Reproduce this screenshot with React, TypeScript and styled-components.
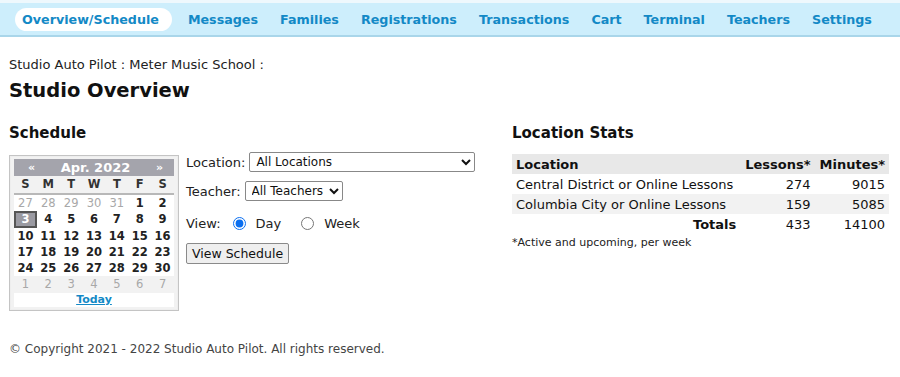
import styled, { createGlobalStyle } from "styled-components";

const GlobalStyle = createGlobalStyle`
  html, body {
    margin: 0;
    padding: 0;
    background: #ffffff;
    font-family: "DejaVu Sans", Verdana, sans-serif;
    color: #111;
  }
`;

const NavBar = styled.nav`
  display: flex;
  align-items: center;
  height: 32px;
  padding: 0 0 0 15px;
  background: #cdeefc;
  border-top: 3px solid #eef8fd;
  border-bottom: 2px solid #a9d6ea;
`;

const NavItem = styled.a<{ $active?: boolean }>`
  font-size: 12.7px;
  font-weight: bold;
  color: #1389c6;
  text-decoration: none;
  padding: ${(p) => (p.$active ? "4px 13px 4px 7px" : "4px 0")};
  margin-right: ${(p) => (p.$active ? "16px" : "22px")};
  border-radius: 12px;
  background: ${(p) => (p.$active ? "#ffffff" : "transparent")};
  white-space: nowrap;
`;

const Page = styled.main`
  padding: 20px 9px 0 9px;
`;

const Crumb = styled.div`
  font-size: 13px;
  color: #222;
`;

const Title = styled.h1`
  font-size: 19.5px;
  font-weight: bold;
  margin: 7px 0 0 0;
`;

const Columns = styled.div`
  display: grid;
  grid-template-columns: 503px 377px;
  margin-top: 22px;
`;

const SectionTitle = styled.h2<{ $gap: number }>`
  font-size: 15px;
  font-weight: bold;
  margin: 0 0 ${(p) => p.$gap}px 0;
`;

const ScheduleRow = styled.div`
  display: flex;
  gap: 7px;
`;

const Calendar = styled.div`
  width: 160px;
  padding: 3px 4px 3px 4px;
  border: 1px solid #c4c4c4;
  box-shadow: inset 0 0 0 1px #eee;
  background: #f2f2f2;
`;

const CalHeader = styled.div`
  display: flex;
  justify-content: space-between;
  align-items: center;
  height: 17px;
  padding: 0 11px 0 14px;
  background: #a4a4ac;
  color: #fff;
  font-weight: bold;
  font-size: 13px;
`;

const Arrow = styled.span`
  font-size: 11px;
`;

const CalGrid = styled.div`
  display: grid;
  grid-template-columns: repeat(7, 1fr);
  font-size: 11.5px;
  text-align: center;
`;

const DayName = styled.div`
  font-weight: bold;
  height: 17px;
  line-height: 17px;
  color: #333;
  border-bottom: 2px solid #b8b8b8;
`;

const DateCell = styled.div<{ $muted?: boolean; $today?: boolean; $plain?: boolean }>`
  height: 16.3px;
  line-height: 16.3px;
  font-weight: ${(p) => (p.$muted ? "normal" : "bold")};
  color: ${(p) => (p.$muted ? "#a8a8a8" : p.$today ? "#fff" : "#222")};
  background: ${(p) => (p.$today ? "#9a9aa2" : p.$plain ? "transparent" : "#fff")};
  outline: ${(p) => (p.$today ? "2px solid #555" : "none")};
  outline-offset: -2px;
`;

const TodayRow = styled.div`
  height: 14px;
  line-height: 13px;
  background: #fff;
  text-align: center;
  font-size: 11px;
  font-weight: bold;
`;

const TodayLink = styled.a`
  color: #1389c6;
  text-decoration: underline;
`;

const Form = styled.div`
  display: flex;
  flex-direction: column;
  font-size: 13px;
  color: #222;
  margin-top: -3px;
`;

const Field = styled.label<{ $mt: number }>`
  display: flex;
  align-items: center;
  gap: 4px;
  margin-top: ${(p) => p.$mt}px;
`;

const Select = styled.select<{ $w: number }>`
  width: ${(p) => p.$w}px;
  height: 20px;
  font-family: "DejaVu Sans", Verdana, sans-serif;
  font-size: 12px;
  border: 1px solid #888;
  border-radius: 2px;
  background: #fff;
  color: #111;
  padding: 0 2px;
`;

const Radio = styled.input<{ $ml: number }>`
  margin: 0 6px 0 ${(p) => p.$ml}px;
  width: 13px;
  height: 13px;
  accent-color: #0b6ff0;
`;

const Button = styled.button`
  align-self: flex-start;
  margin-top: 12px;
  font-family: "DejaVu Sans", Verdana, sans-serif;
  font-size: 12.5px;
  height: 21px;
  padding: 0 5px;
  border: 1px solid #8a8a8a;
  border-radius: 2px;
  background: #efefef;
  color: #111;
`;

const StatsTable = styled.table`
  width: 377px;
  border-collapse: collapse;
  font-size: 13px;
`;

const Th = styled.th<{ $right?: boolean }>`
  text-align: ${(p) => (p.$right ? "right" : "left")};
  background: #e8e8e8;
  padding: 2px 4px;
  height: 16px;
`;

const Tr = styled.tr<{ $shade?: boolean }>`
  background: ${(p) => (p.$shade ? "#f2f2f2" : "#fff")};
`;

const Td = styled.td<{ $right?: boolean; $bold?: boolean }>`
  text-align: ${(p) => (p.$right ? "right" : "left")};
  font-weight: ${(p) => (p.$bold ? "bold" : "normal")};
  padding: 2px 4px;
  height: 16px;
`;

const Note = styled.div`
  font-size: 11px;
  margin-top: 2px;
  color: #222;
`;

const Footer = styled.footer`
  font-size: 12px;
  color: #444;
  margin-top: 31px;
`;

const navItems = [
  "Overview/Schedule",
  "Messages",
  "Families",
  "Registrations",
  "Transactions",
  "Cart",
  "Terminal",
  "Teachers",
  "Settings",
];

const prevDays = [27, 28, 29, 30, 31];
const nextDays = [1, 2, 3, 4, 5, 6, 7];

export default function App() {
  const cells: { n: number; muted?: boolean; today?: boolean; plain?: boolean }[] = [
    ...prevDays.map((n) => ({ n, muted: true })),
    ...Array.from({ length: 30 }, (_, i) => ({ n: i + 1, today: i + 1 === 3 })),
    ...nextDays.map((n) => ({ n, muted: true, plain: true })),
  ];

  return (
    <>
      <GlobalStyle />
      <NavBar>
        {navItems.map((item, i) => (
          <NavItem key={item} $active={i === 0}>
            {item}
          </NavItem>
        ))}
      </NavBar>
      <Page>
        <Crumb>Studio Auto Pilot : Meter Music School :</Crumb>
        <Title>Studio Overview</Title>
        <Columns>
          <div>
            <SectionTitle $gap={13}>Schedule</SectionTitle>
            <ScheduleRow>
              <Calendar>
                <CalHeader>
                  <Arrow>«</Arrow>
                  <span>Apr. 2022</span>
                  <Arrow>»</Arrow>
                </CalHeader>
                <CalGrid>
                  {["S", "M", "T", "W", "T", "F", "S"].map((d, i) => (
                    <DayName key={i}>{d}</DayName>
                  ))}
                  {cells.map((c, i) => (
                    <DateCell key={i} $muted={c.muted} $today={c.today} $plain={c.plain}>
                      {c.n}
                    </DateCell>
                  ))}
                </CalGrid>
                <TodayRow>
                  <TodayLink>Today</TodayLink>
                </TodayRow>
              </Calendar>
              <Form>
                <Field $mt={0}>
                  Location:
                  <Select $w={226} defaultValue="all">
                    <option value="all">All Locations</option>
                  </Select>
                </Field>
                <Field $mt={9}>
                  Teacher:
                  <Select $w={98} defaultValue="all">
                    <option value="all">All Teachers</option>
                  </Select>
                </Field>
                <Field as="div" $mt={15}>
                  View:
                  <Radio type="radio" name="view" $ml={8} defaultChecked />
                  Day
                  <Radio type="radio" name="view" $ml={16} />
                  Week
                </Field>
                <Button>View Schedule</Button>
              </Form>
            </ScheduleRow>
          </div>
          <div>
            <SectionTitle $gap={12}>Location Stats</SectionTitle>
            <StatsTable>
              <thead>
                <tr>
                  <Th>Location</Th>
                  <Th $right>Lessons*</Th>
                  <Th $right>Minutes*</Th>
                </tr>
              </thead>
              <tbody>
                <Tr>
                  <Td>Central District or Online Lessons</Td>
                  <Td $right>274</Td>
                  <Td $right>9015</Td>
                </Tr>
                <Tr $shade>
                  <Td>Columbia City or Online Lessons</Td>
                  <Td $right>159</Td>
                  <Td $right>5085</Td>
                </Tr>
                <Tr>
                  <Td $right $bold>
                    Totals
                  </Td>
                  <Td $right>433</Td>
                  <Td $right>14100</Td>
                </Tr>
              </tbody>
            </StatsTable>
            <Note>*Active and upcoming, per week</Note>
          </div>
        </Columns>
        <Footer>© Copyright 2021 - 2022 Studio Auto Pilot. All rights reserved.</Footer>
      </Page>
    </>
  );
}
